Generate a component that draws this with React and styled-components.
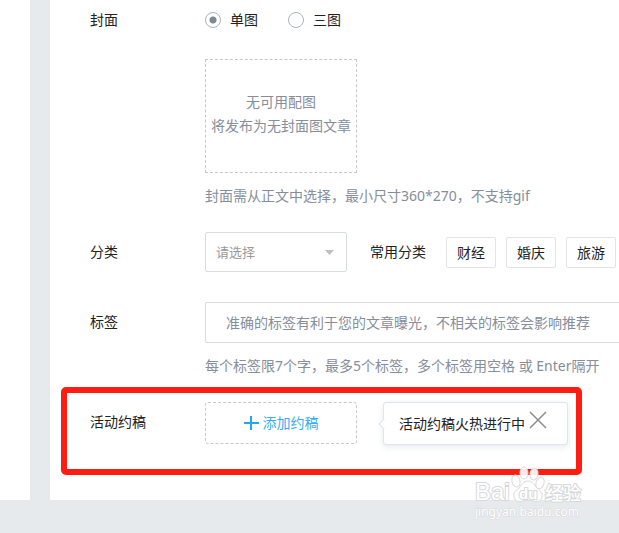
import React, { useState } from 'react';
import styled, { createGlobalStyle } from 'styled-components';

const GlobalStyle = createGlobalStyle`
  * {
    box-sizing: border-box;
  }
  body {
    margin: 0;
    background: #e6eaed;
    color: #222;
    font: 14px/24px 'Noto Sans', 'Noto Sans CJK SC', sans-serif;
  }
  button, input, select {
    font: inherit;
    color: inherit;
    margin: 0;
  }
`;

const Page = styled.div`
  position: relative;
  display: grid;
  grid-template-columns: 30px minmax(0, 1fr);
  column-gap: 20px;
  min-height: 100vh;
  padding-bottom: 33px;
  overflow: hidden;
`;

const Sidebar = styled.aside`
  background: #fff;
`;

const Panel = styled.form`
  background: #fff;
  padding: 8px 0 55px 40px;
`;

const Row = styled.div`
  position: relative;
  display: grid;
  grid-template-columns: 115px minmax(0, 1fr);
  margin-bottom: ${props => props.$gap || 0}px;
`;

const RowLabel = styled.label`
  line-height: ${props => props.$height || 24}px;
`;

const Inline = styled.div`
  display: flex;
  align-items: ${props => props.$align || 'center'};
  white-space: nowrap;
`;

const RadioLabel = styled.label`
  display: flex;
  align-items: center;
  gap: 9px;
  margin-right: 30px;
`;

const Radio = styled.input`
  appearance: none;
  width: 16px;
  height: 16px;
  border: 1px solid #a9b2bc;
  border-radius: 50%;
  background: #fff;
  &:checked {
    background: radial-gradient(circle, #7a8794 0 3px, transparent 4px);
  }
`;

const Cover = styled.div`
  display: flex;
  flex-direction: column;
  justify-content: center;
  width: 152px;
  height: 114px;
  margin-top: 27px;
  padding-bottom: 4px;
  border: 1px dashed #c4c8c8;
  color: #868e9b;
  text-align: center;
  white-space: nowrap;
`;

const Hint = styled.p`
  margin: 11px 0 0;
  color: #868e9b;
  white-space: nowrap;
`;

const SelectBox = styled.div`
  display: grid;
  align-items: center;
  width: 142px;
  margin-right: 23px;
  & > * {
    grid-area: 1 / 1;
  }
  svg {
    justify-self: end;
    margin-right: 13px;
    pointer-events: none;
  }
`;

const Select = styled.select`
  appearance: none;
  height: 40px;
  padding: 0 30px 0 10px;
  border: 1px solid #d8dcdf;
  border-radius: 2px;
  background: #fff;
  color: #999;
  font-size: 13px;
`;

const Tags = styled.div`
  display: flex;
  gap: 10px;
  margin: 1px 0 0 20px;
`;

const TagButton = styled.button`
  width: 50px;
  height: 31px;
  padding: 0;
  border: 1px solid #e2e4e8;
  border-radius: 2px;
  background: #fff;
`;

const TextInput = styled.input`
  display: block;
  width: 100%;
  height: 41px;
  padding: 0 20px;
  border: 1px solid #d9dbdd;
  border-right: 0;
  border-radius: 2px 0 0 2px;
  outline: none;
  &::placeholder {
    color: #868e9b;
    opacity: 1;
  }
`;

const AddButton = styled.button`
  display: flex;
  align-items: center;
  justify-content: center;
  gap: 4px;
  width: 152px;
  height: 42px;
  padding: 0;
  border: 1px dashed #c4caca;
  border-radius: 3px;
  background: #fff;
  color: #35aef5;
`;

const Tip = styled.div`
  position: relative;
  display: flex;
  align-items: center;
  gap: 4px;
  height: 43px;
  margin-left: 26px;
  padding: 0 20px 0 15px;
  border: 1px solid #dde5ed;
  border-radius: 3px;
  background: #fff;
  box-shadow: 0 2px 6px rgba(120, 140, 160, 0.18);
  &::before {
    content: '';
    position: absolute;
    left: -4px;
    top: 17px;
    width: 7px;
    height: 7px;
    border: 1px solid #dde5ed;
    border-width: 0 0 1px 1px;
    background: #fff;
    transform: rotate(45deg);
  }
`;

const CloseButton = styled.button`
  display: flex;
  margin-bottom: 8px;
  padding: 0;
  border: 0;
  background: none;
`;

const Highlight = styled.div`
  position: absolute;
  left: -29px;
  top: -15px;
  width: 521px;
  height: 88px;
  border: 6px solid #ff1c10;
  border-radius: 5px;
  pointer-events: none;
`;

const Watermark = styled.svg`
  position: absolute;
  right: 29px;
  bottom: 11px;
`;

const categories = ['财经', '婚庆', '旅游'];

function BrandMark() {
  return (
    <Watermark width="120" height="60" viewBox="0 0 120 60">
      <g fill="#fff" fillOpacity="0.9" stroke="#d9dadb" strokeWidth="1">
        <ellipse cx="46" cy="19" rx="4" ry="6" transform="rotate(-15 46 19)" />
        <ellipse cx="54" cy="11" rx="4" ry="6" />
        <ellipse cx="64" cy="12" rx="4" ry="6" transform="rotate(8 64 12)" />
        <ellipse cx="70" cy="21" rx="4" ry="6" transform="rotate(18 70 21)" />
        <path d="M58 19c-5 0-6 4-9 7-4 3-6 5-5 9 1 5 5 5 9 4 3-1 7-1 10 0 4 1 8 1 9-4 1-4-2-6-5-9-3-3-4-7-9-7z" />
      </g>
      <g
        fill="#fff"
        stroke="#d7d8da"
        strokeWidth="2"
        paintOrder="stroke"
        fontFamily="'Liberation Sans', 'Noto Sans CJK SC', sans-serif"
      >
        <text x="5" y="38" fontSize="24">Bai</text>
        <text x="49" y="37" fontSize="15" fontWeight="700">du</text>
        <text x="75" y="38" fontSize="18" fontWeight="500">经验</text>
        <text x="5" y="54" fontSize="12" strokeWidth="1" fontFamily="'Noto Sans', sans-serif">
          jingyan.baidu.com
        </text>
      </g>
    </Watermark>
  );
}

function App() {
  const [cover, setCover] = useState('single');
  const [showTip, setShowTip] = useState(true);

  return (
    <>
      <GlobalStyle />
      <Page>
        <Sidebar />
        <Panel onSubmit={e => e.preventDefault()}>
          <Row $gap={24} role="radiogroup" aria-labelledby="cover">
            <RowLabel as="span" id="cover">封面</RowLabel>
            <div>
              <Inline>
                <RadioLabel>
                  <Radio
                    type="radio"
                    name="cover"
                    checked={cover === 'single'}
                    onChange={() => setCover('single')}
                  />
                  单图
                </RadioLabel>
                <RadioLabel>
                  <Radio
                    type="radio"
                    name="cover"
                    checked={cover === 'triple'}
                    onChange={() => setCover('triple')}
                  />
                  三图
                </RadioLabel>
              </Inline>
              <Cover>
                <span>无可用配图</span>
                <span>将发布为无封面图文章</span>
              </Cover>
              <Hint>封面需从正文中选择，最小尺寸360*270，不支持gif</Hint>
            </div>
          </Row>

          <Row $gap={30}>
            <RowLabel $height={40} htmlFor="category">分类</RowLabel>
            <Inline>
              <SelectBox>
                <Select id="category" defaultValue="">
                  <option value="">请选择</option>
                  {categories.map(name => (
                    <option key={name}>{name}</option>
                  ))}
                </Select>
                <svg width="9" height="5" viewBox="0 0 9 5">
                  <path d="M0 0h9L4.500 5z" fill="#bfbfbf" />
                </svg>
              </SelectBox>
              <span>常用分类</span>
              <Tags>
                {categories.map(name => (
                  <TagButton type="button" key={name}>{name}</TagButton>
                ))}
              </Tags>
            </Inline>
          </Row>

          <Row $gap={24}>
            <RowLabel $height={40} htmlFor="tags">标签</RowLabel>
            <div>
              <TextInput
                id="tags"
                placeholder="准确的标签有利于您的文章曝光，不相关的标签会影响推荐"
              />
              <Hint>每个标签限7个字，最多5个标签，多个标签用空格 或 Enter隔开</Hint>
            </div>
          </Row>

          <Row>
            <RowLabel $height={40} htmlFor="add">活动约稿</RowLabel>
            <Inline $align="flex-start">
              <AddButton type="button" id="add">
                <svg width="15" height="14" viewBox="0 0 15 14">
                  <path d="M0 7h15M7 0v14" stroke="#1fa8f5" strokeWidth="2" />
                </svg>
                添加约稿
              </AddButton>
              {showTip && (
                <Tip>
                  活动约稿火热进行中
                  <CloseButton type="button" aria-label="关闭" onClick={() => setShowTip(false)}>
                    <svg width="18" height="18" viewBox="0 0 18 18">
                      <path d="M1 1l16 16M17 1L1 17" stroke="#8c8c8c" strokeWidth="1.500" />
                    </svg>
                  </CloseButton>
                </Tip>
              )}
            </Inline>
            <Highlight />
          </Row>
        </Panel>
        <BrandMark />
      </Page>
    </>
  );
}

export default App;
